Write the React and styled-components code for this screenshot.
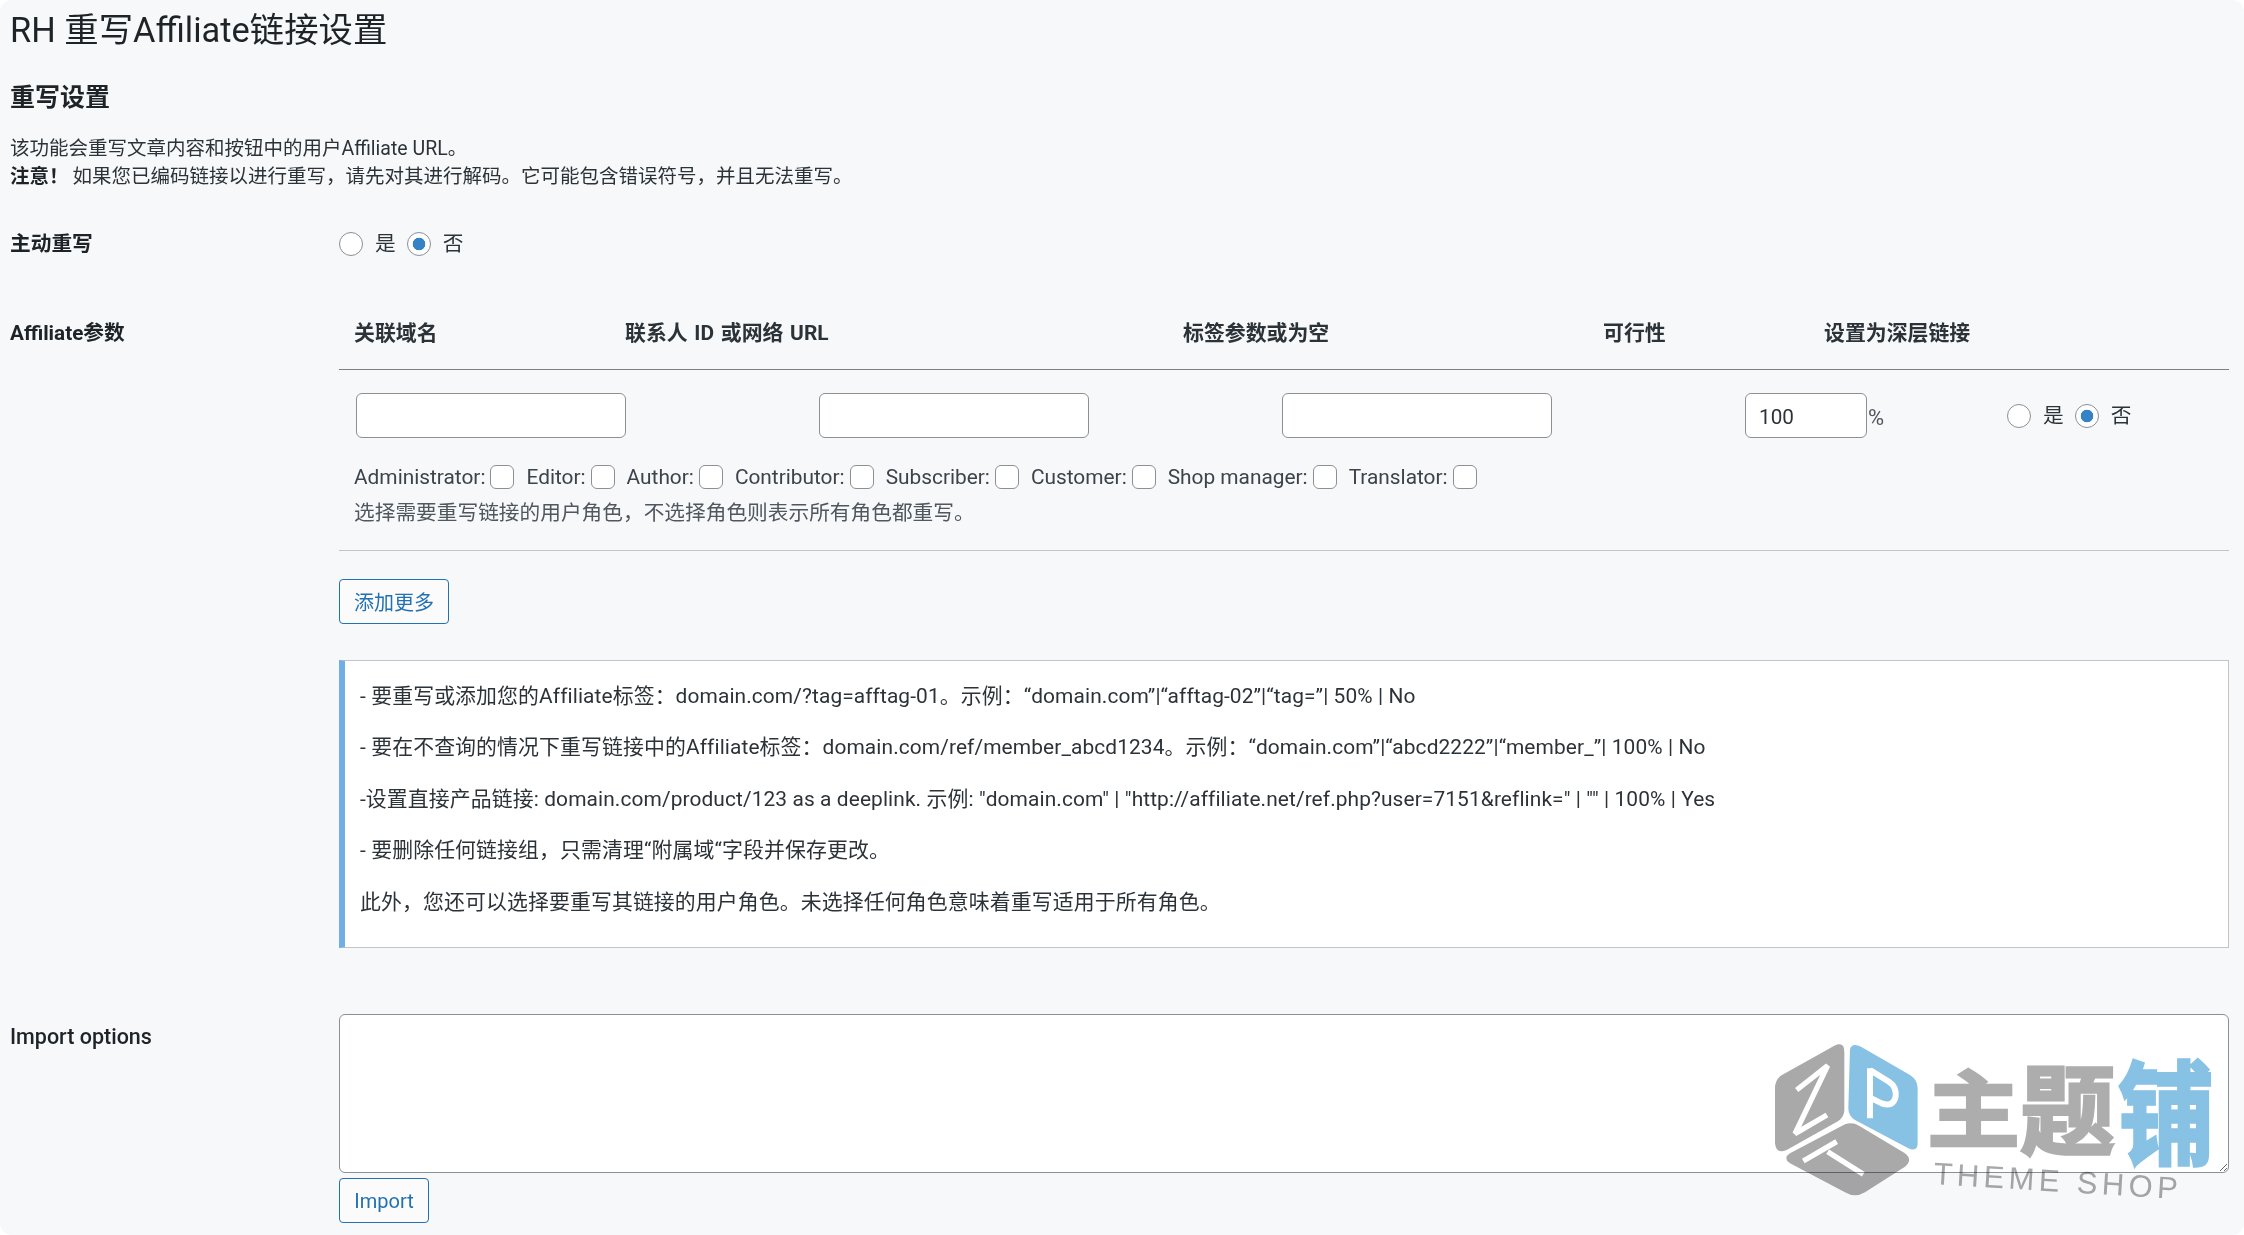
import React from "react";
import styled, { createGlobalStyle } from "styled-components";

const FONT = `Roboto, "Noto Sans CJK SC", sans-serif`;

const Global = createGlobalStyle`
  html, body { margin: 0; padding: 0; background: #fff; }
  body { font-family: ${FONT}; font-size: 20px; color: #2c3338; }
  * { box-sizing: border-box; }
`;

const Page = styled.div`
  position: relative;
  height: 1235px;
  overflow: hidden;
  padding: 0 15px 0 10px;
  background: #f7f8fa;
  border-radius: 12px;
`;
const Title = styled.h1`
  margin: 0;
  height: 60px;
  font-size: 34.4px;
  line-height: 60px;
  font-weight: 400;
  color: #1d2327;
`;
const Section = styled.h2`
  margin: 21px 0 0;
  font-size: 25px;
  line-height: 34px;
  font-weight: 700;
  color: #1d2327;
`;
const Intro = styled.p`
  margin: 20px 0 0;
  font-size: 19.5px;
  line-height: 27.5px;
  color: #2c3338;
  strong { font-weight: 700; color: #1d2327; margin-right: 4px; }
`;
const FormRow = styled.div`
  display: grid;
  grid-template-columns: 329px 1fr;
  margin-top: ${(p) => p.$top}px;
`;
const RowLabel = styled.div`
  font-size: 20.7px;
  line-height: ${(p) => p.$lh || 30}px;
  font-weight: 700;
  color: #1d2327;
  padding-top: ${(p) => p.$pad || 0}px;
`;
const RadioGroup = styled.div`
  display: flex;
  align-items: center;
  height: 24px;
`;
const Radio = styled.input.attrs({ type: "radio" })`
  appearance: none;
  width: 24px;
  height: 24px;
  margin: 0;
  border: 1px solid #8c8f94;
  border-radius: 50%;
  background: #fff;
  flex: none;
  &:checked { background: radial-gradient(circle, #3582c4 0 6px, #fff 6.6px); }
`;
const RadioText = styled.span`
  font-size: 20.7px;
  line-height: 24px;
  margin: 0 11px 0 12px;
  color: #2c3338;
`;
const TableHead = styled.div`
  display: grid;
  grid-template-columns: 271px 558px 420px 221px 1fr;
  padding-left: 15px;
  height: 55px;
  border-bottom: 1px solid #7c7f84;
`;
const HeadCell = styled.div`
  font-size: 20.9px;
  line-height: 36px;
  font-weight: 700;
  word-spacing: 1.5px;
  color: #2c3338;
`;
const DataRow = styled.div`
  display: grid;
  grid-template-columns: 463px 463px 463px 262px 1fr;
  align-items: center;
  padding: 23px 0 0 17px;
`;
const TextField = styled.input.attrs({ type: "text" })`
  display: block;
  width: ${(p) => p.$w}px;
  height: 45px;
  padding: 2px 13px 0;
  border: 1px solid #8c8f94;
  border-radius: 6px;
  background: #fff;
  font: 20.7px ${FONT};
  color: #2c3338;
`;
const NumberCell = styled.div`
  display: flex;
  align-items: center;
`;
const Unit = styled.span`
  font-size: 22px;
  padding: 4px 0 0 1px;
  color: #50575e;
`;
const Roles = styled.div`
  display: flex;
  align-items: center;
  margin: 27px 0 0 15px;
  height: 24px;
`;
const Role = styled.label`
  display: flex;
  align-items: center;
  gap: 5px;
  margin-right: 12px;
  font-size: 20.85px;
  color: #3c434a;
`;
const Check = styled.input.attrs({ type: "checkbox" })`
  appearance: none;
  width: 24px;
  height: 24px;
  margin: 0;
  border: 1px solid #8c8f94;
  border-radius: 6px;
  background: #fff;
`;
const Helper = styled.p`
  margin: 9px 0 0 15px;
  padding-bottom: 22px;
  font-size: 20.7px;
  line-height: 30px;
  color: #50575e;
`;
const Rule = styled.hr`
  margin: 0;
  border: 0;
  border-top: 1px solid #c3c4c7;
`;
const OutlineButton = styled.button`
  display: block;
  height: 45px;
  width: ${(p) => p.$w}px;
  margin-top: ${(p) => p.$top}px;
  padding: 0;
  border: 1px solid #2271b1;
  border-radius: 4px;
  background: #fbfbfc;
  color: #2271b1;
  font: 20px ${FONT};
`;
const Notice = styled.div`
  margin-top: 36px;
  height: 288px;
  padding: 20px 15px 0;
  background: #fff;
  border: 1px solid #c3c4c7;
  border-left: 6px solid #72aee6;
  display: flex;
  flex-direction: column;
  gap: 21.4px;
`;
const NoticeLine = styled.p`
  margin: 0;
  font-size: 20.9px;
  letter-spacing: 0.1px;
  line-height: 30px;
  color: #2c3338;
`;
const ImportLabel = styled(RowLabel)`
  font-weight: 500;
  font-size: 21.5px;
  color: #1d2327;
`;
const ImportArea = styled.textarea`
  display: block;
  width: 100%;
  height: 159px;
  padding: 6px 12px;
  border: 1px solid #8c8f94;
  border-radius: 6px;
  background: #fff;
`;
const Watermark = styled.svg`
  position: absolute;
  left: 1765px;
  top: 1010px;
  width: 465px;
  height: 205px;
  mix-blend-mode: multiply;
  pointer-events: none;
`;
const LogoGlyph = styled.text`
  font-family: "Noto Sans CJK SC", sans-serif;
  font-weight: 700;
  font-size: 100px;
  stroke-width: 3px;
  fill: ${(p) => p.$c};
  stroke: ${(p) => p.$c};
`;
const LogoLine = styled.text`
  font-family: "Liberation Sans", sans-serif;
  font-size: 31px;
  letter-spacing: 4.4px;
  fill: #a9a9a9;
`;

const roles = ["Administrator", "Editor", "Author", "Contributor", "Subscriber", "Customer", "Shop manager", "Translator"];
const heads = ["关联域名", "联系人 ID 或网络 URL", "标签参数或为空", "可行性", "设置为深层链接"];
const notes = [
  "- 要重写或添加您的Affiliate标签：domain.com/?tag=afftag-01。示例：“domain.com”|“afftag-02”|“tag=”| 50% | No",
  "- 要在不查询的情况下重写链接中的Affiliate标签：domain.com/ref/member_abcd1234。示例：“domain.com”|“abcd2222”|“member_”| 100% | No",
  '-设置直接产品链接: domain.com/product/123 as a deeplink. 示例: "domain.com" | "http://affiliate.net/ref.php?user=7151&reflink=" | "" | 100% | Yes',
  "- 要删除任何链接组，只需清理“附属域“字段并保存更改。",
  "此外，您还可以选择要重写其链接的用户角色。未选择任何角色意味着重写适用于所有角色。",
];

function YesNo({ name }) {
  return (
    <RadioGroup>
      <Radio name={name} />
      <RadioText>是</RadioText>
      <Radio name={name} defaultChecked />
      <RadioText>否</RadioText>
    </RadioGroup>
  );
}

function Logo() {
  return (
    <Watermark viewBox="0 -25 465 205">
      <g transform="scale(0.3333)">
        <path d="M208 32 Q238 18 238 50 L238 225 Q238 245 220 258 L65 345 Q33 358 30 325 L30 160 Q30 130 55 118 Z" fill="#a9a9a9" />
        <path d="M95 165 L188 92 L90 296 L186 240" fill="none" stroke="#fff" strokeWidth="16" strokeLinejoin="bevel" />
        <path d="M255 42 Q262 22 288 35 L435 120 Q458 135 458 160 L458 325 Q458 352 430 340 L270 255 Q250 243 250 220 Z" fill="#87c1e4" />
        <path d="M315 100 L315 250 M315 105 L372 140 Q395 155 392 185 Q385 218 350 205 L315 188" fill="none" stroke="#fff" strokeWidth="18" />
        <path d="M240 268 Q262 260 282 272 L420 355 Q445 375 420 395 L300 472 Q270 490 240 472 L75 385 Q52 370 75 355 Z" fill="#a9a9a9" />
        <path d="M115 378 L215 320 M188 350 L295 418" fill="none" stroke="#fff" strokeWidth="16" />
      </g>
      <LogoGlyph $c="#adadad" transform="translate(162 106) scale(0.93 0.84)">主</LogoGlyph>
      <LogoGlyph $c="#adadad" transform="translate(255 112) scale(0.95 0.98)">题</LogoGlyph>
      <LogoGlyph $c="#87c1e4" transform="translate(353 121) scale(0.96 1.12)">铺</LogoGlyph>
      <LogoLine transform="translate(168 149) rotate(3.5)">THEME SHOP</LogoLine>
    </Watermark>
  );
}

export default function App() {
  return (
    <Page>
      <Global />
      <Title>RH 重写Affiliate链接设置</Title>
      <Section>重写设置</Section>
      <Intro>
        该功能会重写文章内容和按钮中的用户Affiliate URL。
        <br />
        <strong>注意！</strong>如果您已编码链接以进行重写，请先对其进行解码。它可能包含错误符号，并且无法重写。
      </Intro>
      <FormRow $top={42}>
        <RowLabel $lh={24}>主动重写</RowLabel>
        <YesNo name="active" />
      </FormRow>
      <FormRow $top={59}>
        <RowLabel $pad={3}>Affiliate参数</RowLabel>
        <div>
          <TableHead>
            {heads.map((h) => (
              <HeadCell key={h}>{h}</HeadCell>
            ))}
          </TableHead>
          <DataRow>
            <TextField $w={270} />
            <TextField $w={270} />
            <TextField $w={270} />
            <NumberCell>
              <TextField $w={122} defaultValue="100" />
              <Unit>%</Unit>
            </NumberCell>
            <YesNo name="deep" />
          </DataRow>
          <Roles>
            {roles.map((r) => (
              <Role key={r}>
                {r}:
                <Check />
              </Role>
            ))}
          </Roles>
          <Helper>选择需要重写链接的用户角色，不选择角色则表示所有角色都重写。</Helper>
          <Rule />
          <OutlineButton $w={110} $top={28}>添加更多</OutlineButton>
          <Notice>
            {notes.map((n) => (
              <NoticeLine key={n}>{n}</NoticeLine>
            ))}
          </Notice>
        </div>
      </FormRow>
      <FormRow $top={66}>
        <ImportLabel $pad={8}>Import options</ImportLabel>
        <div>
          <ImportArea />
          <OutlineButton $w={90} $top={5}>Import</OutlineButton>
        </div>
      </FormRow>
      <Logo />
    </Page>
  );
}
